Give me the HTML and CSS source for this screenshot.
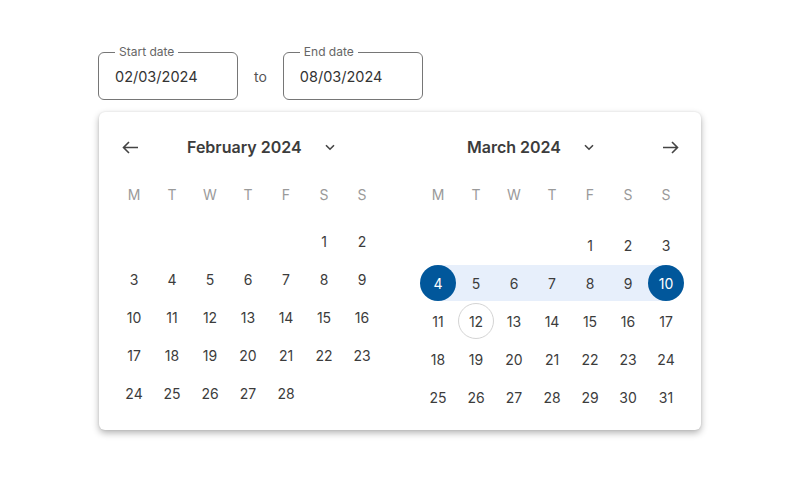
FILE: index.html
```html
<!DOCTYPE html>
<html lang="en">
  <head>
    <meta charset="UTF-8" />
    <meta name="viewport" content="width=device-width, initial-scale=1.0" />
    <title>Date range picker</title>
    <link rel="stylesheet" href="styles.css">
  </head>
  <body>
    <div class="picker">
      <div class="range-fields">
        <label class="date-field">
          <span class="date-label">Start date</span>
          <input type="text" value="02/03/2024" />
        </label>
        <span class="range-to">to</span>
        <label class="date-field">
          <span class="date-label">End date</span>
          <input type="text" value="08/03/2024" />
        </label>
      </div>

      <div class="popup">
        <section class="month month-feb">
          <header class="month-header">
            <button class="nav-btn" type="button" aria-label="Previous month">
              <svg width="17" height="13" viewBox="0 0 17 13"><path d="M16 6.5H1.5M7 1L1.5 6.5L7 12" fill="none" stroke="#444" stroke-width="1.6"/></svg>
            </button>
            <span class="month-title">February 2024</span>
            <span class="chevron">
              <svg width="10" height="7" viewBox="0 0 10 7"><path d="M1 1.2L5 5.2L9 1.2" fill="none" stroke="#444" stroke-width="1.6"/></svg>
            </span>
          </header>
          <div class="weekdays">
            <span>M</span><span>T</span><span>W</span><span>T</span><span>F</span><span>S</span><span>S</span>
          </div>
          <div class="days">
            <span></span><span></span><span></span><span></span><span></span>
            <span class="day">1</span><span class="day">2</span>
            <span class="day">3</span><span class="day">4</span><span class="day">5</span><span class="day">6</span><span class="day">7</span><span class="day">8</span><span class="day">9</span>
            <span class="day">10</span><span class="day">11</span><span class="day">12</span><span class="day">13</span><span class="day">14</span><span class="day">15</span><span class="day">16</span>
            <span class="day">17</span><span class="day">18</span><span class="day">19</span><span class="day">20</span><span class="day">21</span><span class="day">22</span><span class="day">23</span>
            <span class="day">24</span><span class="day">25</span><span class="day">26</span><span class="day">27</span><span class="day">28</span>
          </div>
        </section>

        <section class="month month-mar">
          <header class="month-header">
            <span class="month-title">March 2024</span>
            <span class="chevron">
              <svg width="10" height="7" viewBox="0 0 10 7"><path d="M1 1.2L5 5.2L9 1.2" fill="none" stroke="#444" stroke-width="1.6"/></svg>
            </span>
            <button class="nav-btn nav-next" type="button" aria-label="Next month">
              <svg width="17" height="13" viewBox="0 0 17 13"><path d="M1 6.5H15.5M10 1L15.5 6.5L10 12" fill="none" stroke="#444" stroke-width="1.6"/></svg>
            </button>
          </header>
          <div class="weekdays">
            <span>M</span><span>T</span><span>W</span><span>T</span><span>F</span><span>S</span><span>S</span>
          </div>
          <div class="days">
            <span></span><span></span><span></span><span></span>
            <span class="day">1</span><span class="day">2</span><span class="day">3</span>
            <span class="day in-range range-start"><b>4</b></span><span class="day in-range">5</span><span class="day in-range">6</span><span class="day in-range">7</span><span class="day in-range">8</span><span class="day in-range">9</span><span class="day in-range range-end"><b>10</b></span>
            <span class="day">11</span><span class="day today"><b>12</b></span><span class="day">13</span><span class="day">14</span><span class="day">15</span><span class="day">16</span><span class="day">17</span>
            <span class="day">18</span><span class="day">19</span><span class="day">20</span><span class="day">21</span><span class="day">22</span><span class="day">23</span><span class="day">24</span>
            <span class="day">25</span><span class="day">26</span><span class="day">27</span><span class="day">28</span><span class="day">29</span><span class="day">30</span><span class="day">31</span>
          </div>
        </section>
      </div>
    </div>
  </body>
</html>
```

FILE: styles.css
```css
body {
  margin: 0;
  min-height: 500px;
  background: #fff;
  font-family: Inter, "Liberation Sans", sans-serif;
  color: #3c3c3c;
}

.picker {
  padding: 52px 0 40px 98px;
}

.range-fields {
  display: flex;
  align-items: center;
  gap: 16px;
}

.date-field {
  position: relative;
  display: block;
  width: 140px;
  height: 48px;
  box-sizing: border-box;
  border: 1px solid #767676;
  border-radius: 6px;
}

.date-field input {
  border: 0;
  outline: 0;
  background: transparent;
  font: inherit;
  font-size: 14.5px;
  color: #333;
  width: 100%;
  box-sizing: border-box;
  height: 46px;
  padding: 0 0 0 16px;
}

.date-label {
  position: absolute;
  top: -8px;
  left: 16px;
  padding: 0 4px;
  background: #fff;
  font-size: 12px;
  line-height: 14px;
  color: #666;
}

.range-to {
  font-size: 14px;
  color: #555;
}

.popup {
  display: flex;
  gap: 38px;
  width: 602px;
  box-sizing: border-box;
  margin: 12px 0 0 1px;
  padding: 17px 16px 14px;
  background: #fff;
  border-radius: 6px;
  box-shadow: 0 3px 7px rgba(0, 0, 0, 0.3), 0 0 2px rgba(0, 0, 0, 0.1);
}

.month {
  width: 266px;
}

.month-header {
  display: flex;
  align-items: center;
  height: 36px;
}

.nav-btn {
  width: 30px;
  height: 30px;
  border: 0;
  padding: 0;
  background: none;
  display: flex;
  align-items: center;
  justify-content: center;
}

.month-title {
  font-size: 16px;
  font-weight: 600;
  color: #3c3c3c;
}

.month-feb .month-title {
  margin-left: 42px;
}

.month-mar .month-title {
  margin-left: 48px;
}

.chevron {
  display: flex;
  margin-left: 23px;
}

.nav-next {
  margin-left: auto;
}

.weekdays,
.days {
  display: grid;
  grid-template-columns: repeat(7, 38px);
  grid-auto-rows: 38px;
  font-size: 14px;
}

.weekdays {
  margin-top: 10px;
  color: #9a9a9a;
}

.weekdays span,
.day {
  display: flex;
  align-items: center;
  justify-content: center;
}

.days {
  margin-top: 9px;
}

.month-mar .days {
  margin-top: 13px;
}

.day {
  position: relative;
}

.day b {
  font-weight: 400;
  width: 36px;
  height: 36px;
  border-radius: 50%;
  display: flex;
  align-items: center;
  justify-content: center;
  position: relative;
}

.in-range {
  background: #e7effb;
  background-clip: content-box;
  padding: 1px 0;
  box-sizing: border-box;
}

.range-start {
  background: linear-gradient(to right, transparent 50%, #e7effb 50%);
  background-clip: content-box;
}

.range-end {
  background: linear-gradient(to right, #e7effb 50%, transparent 50%);
  background-clip: content-box;
}

.range-start b,
.range-end b {
  background: #01579b;
  color: #fff;
}

.today b {
  border: 1px solid #d4d4d4;
  box-sizing: border-box;
}
```
